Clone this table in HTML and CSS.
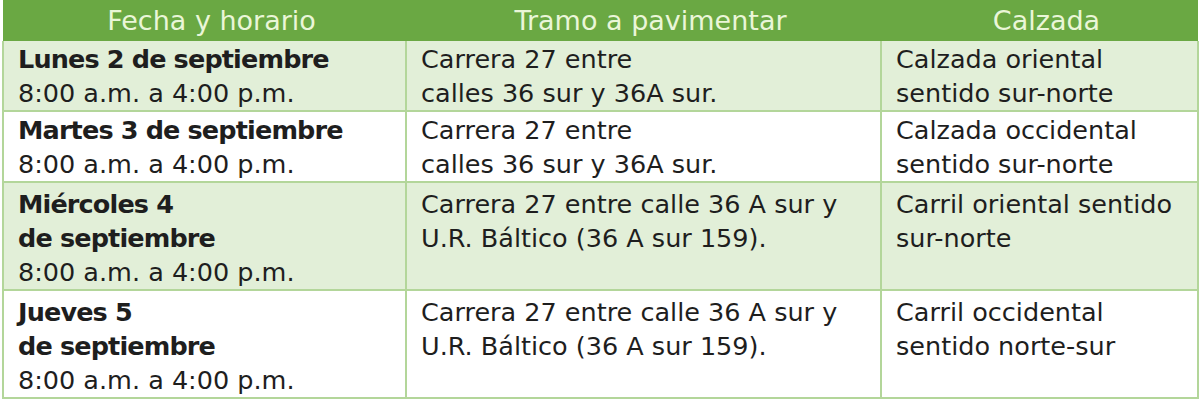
FILE: index.html
```html
<!DOCTYPE html>
<html lang="es">
<head>
<meta charset="utf-8">
<title>Pavimentación</title>
<link rel="stylesheet" href="styles.css">
</head>
<body>
<table class="schedule">
  <colgroup>
    <col class="c1"><col class="c2"><col class="c3">
  </colgroup>
  <thead>
    <tr>
      <th>Fecha y horario</th>
      <th>Tramo a pavimentar</th>
      <th>Calzada</th>
    </tr>
  </thead>
  <tbody>
    <tr class="tint r2">
      <td><span class="day">Lunes 2 de septiembre</span><br>8:00 a.m. a 4:00 p.m.</td>
      <td>Carrera 27 entre<br>calles 36 sur y 36A sur.</td>
      <td>Calzada oriental<br>sentido sur-norte</td>
    </tr>
    <tr class="r2">
      <td><span class="day">Martes 3 de septiembre</span><br>8:00 a.m. a 4:00 p.m.</td>
      <td>Carrera 27 entre<br>calles 36 sur y 36A sur.</td>
      <td>Calzada occidental<br>sentido sur-norte</td>
    </tr>
    <tr class="tint r3">
      <td><span class="day">Miércoles 4<br>de septiembre</span><br>8:00 a.m. a 4:00 p.m.</td>
      <td>Carrera 27 entre calle 36 A sur y<br>U.R. Báltico (36 A sur 159).</td>
      <td>Carril oriental sentido<br>sur-norte</td>
    </tr>
    <tr class="r3">
      <td><span class="day">Jueves 5<br>de septiembre</span><br>8:00 a.m. a 4:00 p.m.</td>
      <td>Carrera 27 entre calle 36 A sur y<br>U.R. Báltico (36 A sur 159).</td>
      <td>Carril occidental<br>sentido norte-sur</td>
    </tr>
  </tbody>
</table>
</body>
</html>
```
FILE: styles.css
```css
html, body {
  margin: 0;
  padding: 0;
  background: #ffffff;
}

.schedule {
  margin-left: 2px;
  width: 1195px;
  border-collapse: collapse;
  table-layout: fixed;
  font-family: "DejaVu Sans", "Liberation Sans", sans-serif;
  color: #1e1e1e;
}

.c1 { width: 403px; }
.c2 { width: 475px; }
.c3 { width: 317px; }

.schedule th {
  background: #6aa843;
  color: #eaf6d8;
  font-weight: 400;
  font-size: 27px;
  height: 41px;
  padding: 0 0 0 14px;
  line-height: 41px;
  text-align: center;
  border: none;
}

.schedule td {
  vertical-align: top;
  font-size: 25.5px;
  line-height: 34px;
  padding: 1px 6px 0 14px;
  border: 2px solid #b3d69a;
  white-space: nowrap;
}

.schedule tbody tr:first-child td {
  border-top: none;
}

.tint td {
  background: #e2efd8;
}

.r3 td {
  padding-top: 4px;
}

.day {
  font-weight: 700;
  letter-spacing: -0.85px;
}
```
